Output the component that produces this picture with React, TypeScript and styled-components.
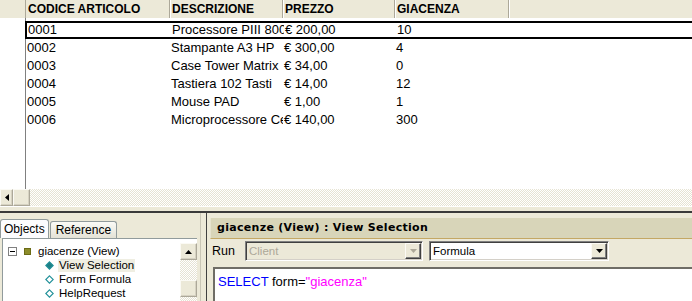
import React from "react";
import styled, { createGlobalStyle, css } from "styled-components";

const GlobalStyle = createGlobalStyle`
  html, body {
    margin: 0;
    padding: 0;
    overflow: hidden;
    background: #ece9d8;
  }
  body {
    font-family: "Liberation Sans", Arial, sans-serif;
    color: #000;
  }
`;

const dither = css`
  background: repeating-conic-gradient(#ffffff 0 25%, #e6e3d3 0 50%) 0 0 / 2px 2px;
`;

const raised = css`
  background: #ece9d8;
  border: 1px solid;
  border-color: #fbfaf4 #aca899 #aca899 #fbfaf4;
  box-shadow: inset -1px -1px 0 #d6d2c2;
`;

const COLS = "144px 113px 112px 114px 1fr";

const rows = [
  { code: "0001", desc: "Processore PIII 800", price: "€ 200,00", qty: "10" },
  { code: "0002", desc: "Stampante A3 HP", price: "€ 300,00", qty: "4" },
  { code: "0003", desc: "Case Tower Matrix", price: "€ 34,00", qty: "0" },
  { code: "0004", desc: "Tastiera 102 Tasti", price: "€ 14,00", qty: "12" },
  { code: "0005", desc: "Mouse PAD", price: "€ 1,00", qty: "1" },
  { code: "0006", desc: "Microprocessore Celeron", price: "€ 140,00", qty: "300" },
];

const Page = styled.div`
  width: 692px;
  height: 301px;
  display: flex;
  flex-direction: column;
  background: #ece9d8;
  overflow: hidden;
`;

const Grid = styled.div`
  height: 189px;
  display: flex;
  flex-direction: column;
  background: #fff;
  overflow: hidden;
`;

const HeaderRow = styled.div`
  display: flex;
  height: 18px;
  background: #ece9d8;
  flex-shrink: 0;
`;

const Corner = styled.div`
  width: 25px;
  border-right: 1px solid #aca899;
`;

const HeaderCells = styled.div`
  flex: 1;
  display: grid;
  grid-template-columns: ${COLS};
`;

const HeaderCell = styled.div<{ $last?: boolean }>`
  font-size: 12px;
  font-weight: bold;
  line-height: 18px;
  padding-left: 2px;
  white-space: nowrap;
  overflow: hidden;
  border-right: ${(p) => (p.$last ? "none" : "1px solid #aca899")};
  box-shadow: ${(p) => (p.$last ? "none" : "1px 0 0 #fff")};
`;

const Body = styled.div`
  flex: 1;
  display: flex;
`;

const Selector = styled.div`
  width: 25px;
  border-right: 1px solid #808080;
`;

const Rows = styled.div`
  flex: 1;
  padding-top: 3px;
`;

const DataRow = styled.div<{ $selected?: boolean }>`
  display: grid;
  grid-template-columns: ${COLS};
  height: 18px;
  box-sizing: border-box;
  font-size: 13px;
  ${(p) =>
    p.$selected &&
    css`
      border: 2px solid #000;
      border-right: none;
      margin-left: -1px;
    `}
`;

const Cell = styled.div<{ $selected?: boolean }>`
  line-height: ${(p) => (p.$selected ? "14px" : "18px")};
  padding-left: 1px;
  white-space: nowrap;
  overflow: hidden;
`;

const HScroll = styled.div`
  height: 17px;
  display: flex;
  flex-shrink: 0;
  ${dither};
`;

const ScrollBtn = styled.div<{ $w: number; $h: number }>`
  width: ${(p) => p.$w}px;
  height: ${(p) => p.$h}px;
  box-sizing: border-box;
  display: flex;
  align-items: center;
  justify-content: center;
  flex-shrink: 0;
  ${raised};
`;

const Splitter = styled.div`
  height: 7px;
  flex-shrink: 0;
  box-sizing: border-box;
  background: #ece9d8;
  border-top: 1px solid #fff;
  border-bottom: 2px solid #3a3a3a;
`;

const Bottom = styled.div`
  flex: 1;
  display: flex;
  min-height: 0;
`;

const LeftPane = styled.div`
  width: 200px;
  padding-top: 6px;
  display: flex;
  flex-direction: column;
`;

const Tabs = styled.div`
  display: flex;
  align-items: flex-end;
  height: 19px;
  flex-shrink: 0;
`;

const Tab = styled.div<{ $active?: boolean }>`
  box-sizing: border-box;
  font-size: 12px;
  padding: 0 3px;
  border: 1px solid #919b9c;
  border-bottom: none;
  border-radius: 3px 3px 0 0;
  margin-right: 1px;
  ${(p) =>
    p.$active
      ? css`
          height: 19px;
          line-height: 19px;
          background: #fcfcfe;
        `
      : css`
          height: 17px;
          line-height: 17px;
          background: linear-gradient(#fafaf6, #e4e2d6);
          padding: 0 5px;
        `}
`;

const TreeBox = styled.div`
  flex: 1;
  margin: 0 3px 0 2px;
  display: flex;
  background: #fff;
  border-top: 1px solid #919b9c;
  border-left: 1px solid #919b9c;
  min-height: 0;
`;

const TreeList = styled.div`
  flex: 1;
  padding: 5px 0 0 5px;
`;

const TreeRow = styled.div<{ $indent?: number }>`
  height: 14px;
  display: flex;
  align-items: center;
  font-size: 11.5px;
  padding-left: ${(p) => p.$indent ?? 0}px;
  white-space: nowrap;
`;

const Expander = styled.div`
  width: 9px;
  height: 9px;
  box-sizing: border-box;
  border: 1px solid #808080;
  display: flex;
  align-items: center;
  justify-content: center;
  margin-right: 7px;
  &::after {
    content: "";
    width: 5px;
    height: 1px;
    background: #000;
  }
`;

const ViewIcon = styled.div`
  width: 7px;
  height: 7px;
  box-sizing: border-box;
  background: #8c8c2a;
  border: 1px solid #6b6b16;
  margin-right: 6px;
`;

const Label = styled.span<{ $highlight?: boolean }>`
  padding: 0 1px;
  line-height: 13px;
  background: ${(p) => (p.$highlight ? "#efeee2" : "transparent")};
`;

const VScroll = styled.div`
  width: 17px;
  margin-top: 4px;
  display: flex;
  flex-direction: column;
  ${dither};
`;

const Track = styled.div<{ $h: number }>`
  height: ${(p) => p.$h}px;
`;

const Divider = styled.div`
  width: 7px;
  box-sizing: border-box;
  border-left: 1px solid #c9c6b6;
  border-right: 1px solid #404040;
`;

const RightPane = styled.div`
  flex: 1;
  padding: 5px 0 0 3px;
  display: flex;
  flex-direction: column;
  min-width: 0;
`;

const TitleBar = styled.div`
  height: 20px;
  flex-shrink: 0;
  background: #d8d5b9;
  border-bottom: 1px solid #c4a865;
  border-left: 1px solid #e6e3cf;
  padding-left: 6px;
  font-family: "DejaVu Sans", Verdana, sans-serif;
  font-weight: bold;
  font-size: 11px;
  line-height: 20px;
  letter-spacing: 0.3px;
  white-space: nowrap;
`;

const Controls = styled.div`
  height: 28px;
  flex-shrink: 0;
  display: flex;
  align-items: flex-start;
  padding: 2px 0 0 2px;
  box-sizing: border-box;
`;

const RunLabel = styled.div`
  width: 33px;
  font-size: 12.5px;
  line-height: 20px;
`;

const Combo = styled.div<{ $disabled?: boolean; $w: number }>`
  width: ${(p) => p.$w}px;
  height: 20px;
  box-sizing: border-box;
  display: flex;
  align-items: stretch;
  margin-right: 6px;
  border: 1px solid;
  border-color: #808080 #fff #fff #808080;
  box-shadow: inset 1px 1px 0 #404040, inset -1px -1px 0 #d4d0c8;
  background: ${(p) => (p.$disabled ? "#ece9d8" : "#fff")};
  color: ${(p) => (p.$disabled ? "#aca899" : "#000")};
`;

const ComboText = styled.div`
  flex: 1;
  font-size: 11.5px;
  line-height: 18px;
  padding-left: 3px;
`;

const ComboBtn = styled.div`
  width: 16px;
  margin: 1px;
  box-sizing: border-box;
  display: flex;
  align-items: center;
  justify-content: center;
  ${raised};
  border-color: #fbfaf4 #404040 #404040 #fbfaf4;
  box-shadow: inset -1px -1px 0 #808080;
`;

const CodeArea = styled.div`
  flex: 1;
  margin-left: 3px;
  background: #fff;
  border-top: 2px solid #6f6d66;
  border-left: 2px solid #6f6d66;
  padding: 5px 0 0 3px;
  font-size: 13px;
  line-height: 16px;
  white-space: nowrap;
`;

const Keyword = styled.span`
  color: #0000ff;
`;

const StringLit = styled.span`
  color: #ff00ff;
`;

const Arrow = ({ dir, color = "#000" }: { dir: "left" | "up" | "down"; color?: string }) => {
  if (dir === "left")
    return (
      <svg width="4" height="7" viewBox="0 0 4 7">
        <path d="M4 0 L0 3.5 L4 7 Z" fill={color} />
      </svg>
    );
  if (dir === "up")
    return (
      <svg width="7" height="4" viewBox="0 0 7 4">
        <path d="M0 4 L3.5 0 L7 4 Z" fill={color} />
      </svg>
    );
  return (
    <svg width="7" height="4" viewBox="0 0 7 4">
      <path d="M0 0 L7 0 L3.5 4 Z" fill={color} />
    </svg>
  );
};

const Diamond = ({ filled }: { filled?: boolean }) => (
  <svg width="9" height="9" viewBox="0 0 9 9" style={{ marginRight: 4 }}>
    <path
      d="M4.5 0.8 L8.2 4.5 L4.5 8.2 L0.8 4.5 Z"
      fill={filled ? "#1f7f86" : "#fff"}
      stroke="#1f8f98"
      strokeWidth="1.1"
    />
  </svg>
);

const headers = ["CODICE ARTICOLO", "DESCRIZIONE", "PREZZO", "GIACENZA", ""];

export default function App() {
  return (
    <>
      <GlobalStyle />
      <Page>
        <Grid>
          <HeaderRow>
            <Corner />
            <HeaderCells>
              {headers.map((h, i) => (
                <HeaderCell key={i} $last={i === headers.length - 1}>
                  {h}
                </HeaderCell>
              ))}
            </HeaderCells>
          </HeaderRow>
          <Body>
            <Selector />
            <Rows>
              {rows.map((r, i) => (
                <DataRow key={r.code} $selected={i === 0}>
                  <Cell $selected={i === 0}>{r.code}</Cell>
                  <Cell $selected={i === 0}>{r.desc}</Cell>
                  <Cell $selected={i === 0}>{r.price}</Cell>
                  <Cell $selected={i === 0}>{r.qty}</Cell>
                  <Cell $selected={i === 0} />
                </DataRow>
              ))}
            </Rows>
          </Body>
        </Grid>
        <HScroll>
          <ScrollBtn $w={13} $h={17}>
            <Arrow dir="left" />
          </ScrollBtn>
          <ScrollBtn $w={17} $h={17} />
        </HScroll>
        <Splitter />
        <Bottom>
          <LeftPane>
            <Tabs>
              <Tab $active>Objects</Tab>
              <Tab>Reference</Tab>
            </Tabs>
            <TreeBox>
              <TreeList>
                <TreeRow>
                  <Expander />
                  <ViewIcon />
                  <Label>giacenze (View)</Label>
                </TreeRow>
                <TreeRow $indent={37}>
                  <Diamond filled />
                  <Label $highlight>View Selection</Label>
                </TreeRow>
                <TreeRow $indent={37}>
                  <Diamond />
                  <Label>Form Formula</Label>
                </TreeRow>
                <TreeRow $indent={37}>
                  <Diamond />
                  <Label>HelpRequest</Label>
                </TreeRow>
              </TreeList>
              <VScroll>
                <ScrollBtn $w={17} $h={17}>
                  <Arrow dir="up" />
                </ScrollBtn>
                <Track $h={20} />
                <ScrollBtn $w={17} $h={17} />
              </VScroll>
            </TreeBox>
          </LeftPane>
          <Divider />
          <RightPane>
            <TitleBar>giacenze (View) : View Selection</TitleBar>
            <Controls>
              <RunLabel>Run</RunLabel>
              <Combo $w={178} $disabled>
                <ComboText>Client</ComboText>
                <ComboBtn>
                  <Arrow dir="down" color="#aca899" />
                </ComboBtn>
              </Combo>
              <Combo $w={180}>
                <ComboText>Formula</ComboText>
                <ComboBtn>
                  <Arrow dir="down" />
                </ComboBtn>
              </Combo>
            </Controls>
            <CodeArea>
              <Keyword>SELECT</Keyword> form=<StringLit>"giacenza"</StringLit>
            </CodeArea>
          </RightPane>
        </Bottom>
      </Page>
    </>
  );
}
